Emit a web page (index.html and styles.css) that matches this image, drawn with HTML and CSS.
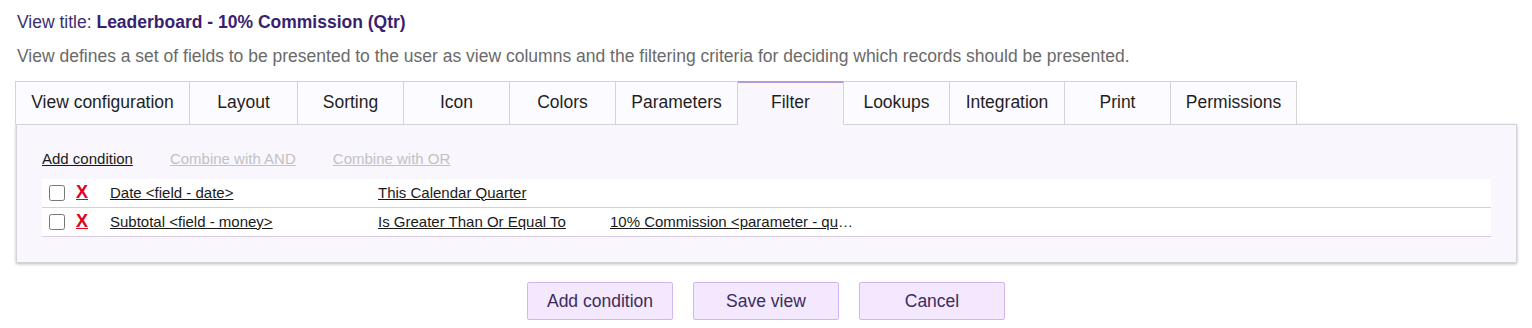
FILE: index.html
```html
<!DOCTYPE html>
<html>
<head>
<meta charset="utf-8">
<link rel="stylesheet" href="styles.css">
</head>
<body>
<div class="page">
  <div class="title">View title: <b>Leaderboard - 10% Commission (Qtr)</b></div>
  <div class="desc">View defines a set of fields to be presented to the user as view columns and the filtering criteria for deciding which records should be presented.</div>
  <div class="tabs">
    <div class="tab">View configuration</div>
    <div class="tab">Layout</div>
    <div class="tab">Sorting</div>
    <div class="tab">Icon</div>
    <div class="tab">Colors</div>
    <div class="tab">Parameters</div>
    <div class="tab active">Filter</div>
    <div class="tab">Lookups</div>
    <div class="tab">Integration</div>
    <div class="tab">Print</div>
    <div class="tab">Permissions</div>
  </div>
  <div class="panel">
    <div class="actions">
      <a class="act">Add condition</a>
      <a class="act disabled">Combine with AND</a>
      <a class="act disabled">Combine with OR</a>
    </div>
    <div class="rows">
      <div class="row">
        <span class="cb"><input type="checkbox"></span>
        <a class="del">X</a>
        <a class="cell">Date &lt;field - date&gt;</a>
        <a class="cell">This Calendar Quarter</a>
        <span></span>
      </div>
      <div class="row">
        <span class="cb"><input type="checkbox"></span>
        <a class="del">X</a>
        <a class="cell">Subtotal &lt;field - money&gt;</a>
        <a class="cell">Is Greater Than Or Equal To</a>
        <span class="valwrap"><a class="cell">10% Commission &lt;parameter - qu</a>…</span>
      </div>
    </div>
  </div>
  <div class="buttons">
    <button class="btn">Add condition</button>
    <button class="btn">Save view</button>
    <button class="btn">Cancel</button>
  </div>
</div>
</body>
</html>
```
FILE: styles.css
```css
html, body {
  margin: 0;
  padding: 0;
  background: #ffffff;
}
body {
  font-family: "Liberation Sans", Arial, sans-serif;
}
.page {
  padding: 12px 15px 0 15px;
}
.title {
  font-size: 17.5px;
  line-height: 20px;
  color: #3b2f6e;
  padding-left: 2px;
}
.title b {
  color: #3a1f70;
}
.desc {
  font-size: 17.5px;
  line-height: 20px;
  color: #6a6a6a;
  margin-top: 14px;
  padding-left: 2px;
}
.tabs {
  display: flex;
  margin-top: 15px;
}
.tab {
  box-sizing: border-box;
  min-width: 106px;
  height: 44px;
  padding: 0 16px 2px 16px;
  border: 1px solid #d3d3d8;
  border-left: none;
  background: #fcfbff;
  font-size: 17.5px;
  color: #1f1f1f;
  white-space: nowrap;
  display: flex;
  align-items: center;
  justify-content: center;
  position: relative;
  z-index: 1;
}
.tab:first-child {
  border-left: 1px solid #d3d3d8;
  width: 175px;
  padding: 0 0 2px 0;
}
.tab:nth-child(2) { width: 108px; }
.tab:nth-child(6) { width: 122px; padding: 0 0 2px 0; }
.tab:nth-child(9) { width: 115px; padding: 0 0 2px 0; }
.tab:nth-child(11) { width: 126px; padding: 0 0 2px 0; }
.tab.active {
  background: #f9f6fe;
  border-top: 2px solid #b69ad6;
  border-bottom-color: #f9f6fe;
  padding-bottom: 3px;
}
.panel {
  margin-top: -1px;
  margin-left: 1px;
  width: 1501px;
  box-sizing: border-box;
  background: #f9f6fe;
  border: 1px solid #d3d3d8;
  box-shadow: 0 1px 3px rgba(0, 0, 0, 0.28);
  padding: 25px 25px 25px 25px;
}
.actions {
  display: flex;
  gap: 37px;
  font-size: 15px;
  line-height: 18px;
}
.act {
  color: #1a1a1a;
  text-decoration: underline;
  cursor: pointer;
}
.act.disabled {
  color: #c2c2c2;
}
.rows {
  margin-top: 11px;
}
.row {
  display: grid;
  grid-template-columns: 34px 34px 268px 232px 1fr;
  align-items: center;
  height: 29px;
  padding-bottom: 2px;
  box-sizing: border-box;
  background: #ffffff;
  border-bottom: 1px solid #d8cbe6;
  font-size: 15px;
  color: #1a1a1a;
}
.cb {
  display: flex;
  align-items: center;
  padding-left: 7px;
  padding-top: 1px;
}
.cb input {
  margin: 0;
  width: 16px;
  height: 16px;
}
.del {
  color: #e0001b;
  font-weight: bold;
  font-size: 18px;
  text-decoration: underline;
  padding-left: 0;
}
.cell {
  text-decoration: underline;
  color: #1a1a1a;
  white-space: nowrap;
}
.valwrap {
  white-space: nowrap;
  color: #1a1a1a;
}
.buttons {
  display: flex;
  justify-content: center;
  gap: 20px;
  margin-top: 19px;
}
.btn {
  width: 146px;
  height: 38px;
  box-sizing: border-box;
  background: #f4e8fe;
  border: 1px solid #d2b6ef;
  border-radius: 2px;
  font-family: "Liberation Sans", Arial, sans-serif;
  font-size: 17.5px;
  color: #3a2d5e;
  padding: 0;
}
```
